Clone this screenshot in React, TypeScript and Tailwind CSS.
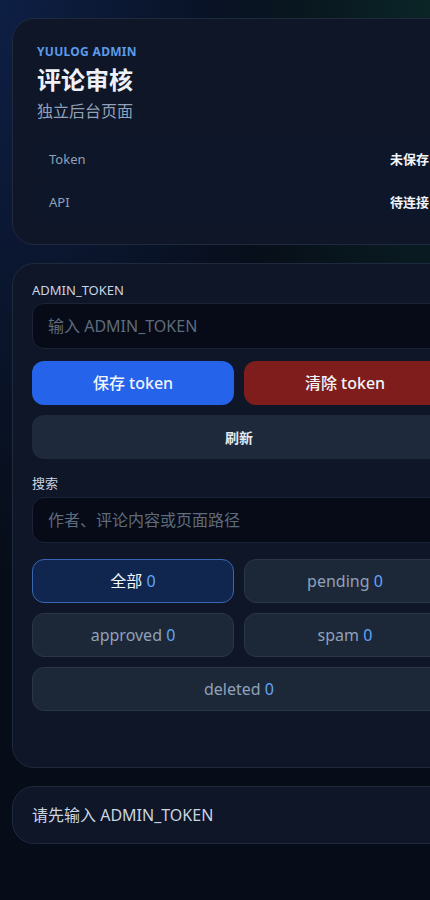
import React from "react";

const font = { fontFamily: '"Noto Sans", "Noto Sans CJK SC", sans-serif' };

const filters = [
  { label: "全部", count: 0, active: true },
  { label: "pending", count: 0 },
  { label: "approved", count: 0 },
  { label: "spam", count: 0 },
];

export default function App() {
  return (
    <div
      className="min-h-[900px] w-[478px] bg-[#070d18] bg-[radial-gradient(ellipse_at_top_left,#0e1f45_0%,transparent_45%),radial-gradient(ellipse_at_top_right,#0b2a2a_0%,transparent_40%)] px-3 pt-[18px] pb-10 text-slate-100"
      style={font}
    >
      <div className="flex flex-col gap-[18px]">
        {/* header */}
        <section className="rounded-[22px] border border-[#1f2a3d] bg-[#0e1628] px-[24px] pt-[24px] pb-[21px]">
          <p className="text-[12px] font-bold tracking-wide text-[#5b9bea]">YUULOG ADMIN</p>
          <h1 className="mt-[3px] text-[24px] leading-8 font-bold text-[#eef2f8]">评论审核</h1>
          <p className="mt-[3px] text-[16px] leading-6 text-slate-400">独立后台页面</p>
          <div className="mt-[17px] flex flex-col gap-[3px]">
            <div className="flex h-[40px] items-center justify-between rounded-lg bg-[#0e172a] px-3 text-[13px]">
              <span className="text-slate-400">Token</span>
              <span className="font-bold text-slate-100">未保存</span>
            </div>
            <div className="flex h-[40px] items-center justify-between rounded-lg bg-[#0e172a] px-3 text-[13px]">
              <span className="text-slate-400">API</span>
              <span className="font-bold text-slate-100">待连接</span>
            </div>
          </div>
        </section>

        {/* controls */}
        <section className="rounded-[22px] border border-[#1f2a3d] bg-[#0e1628] px-[19px] pt-[16px] pb-[56px]">
          <label className="block text-[13px] leading-5 text-slate-300">ADMIN_TOKEN</label>
          <input
            className="mt-[3px] h-[46px] w-full rounded-xl border border-[#1a2436] bg-[#060b17] px-[15px] text-[16px] text-slate-200 placeholder:text-[#5f6b7d] outline-none"
            placeholder="输入 ADMIN_TOKEN"
          />
          <div className="mt-[12px] grid grid-cols-2 gap-[10px]">
            <button className="h-[44px] rounded-xl bg-[#2563eb] text-[16px] font-medium text-slate-100">保存 token</button>
            <button className="h-[44px] rounded-xl bg-[#7f1d1d] text-[16px] font-medium text-slate-100">清除 token</button>
          </div>
          <button className="mt-[10px] h-[44px] w-full rounded-xl bg-[#1e293b] text-[14px] font-bold text-slate-200">刷新</button>

          <label className="mt-[14px] block text-[13px] leading-5 text-slate-300">搜索</label>
          <input
            className="mt-[4px] h-[46px] w-full rounded-xl border border-[#1a2436] bg-[#060b17] px-[15px] text-[16px] text-slate-200 placeholder:text-[#5f6b7d] outline-none"
            placeholder="作者、评论内容或页面路径"
          />
          <div className="mt-4 grid grid-cols-2 gap-[10px]">
            {filters.map((f) => (
              <button
                key={f.label}
                className={
                  f.active
                    ? "h-[44px] rounded-xl border border-[#3866b3] bg-[#10264f] text-[16px] text-slate-100"
                    : "h-[44px] rounded-xl border border-[#2a3649] bg-[#1c2738] text-[16px] text-slate-400"
                }
              >
                {f.label} <span className="text-[#60a5fa]">{f.count}</span>
              </button>
            ))}
            <button className="col-span-2 h-[44px] rounded-xl border border-[#2a3649] bg-[#1c2738] text-[16px] text-slate-400">
              deleted <span className="text-[#60a5fa]">0</span>
            </button>
          </div>
        </section>

        {/* status */}
        <section className="rounded-[22px] border border-[#1f2a3d] bg-[#0e1628] px-[19px] py-[16px]">
          <p className="text-[16px] leading-6 text-slate-300">请先输入 ADMIN_TOKEN</p>
        </section>
      </div>
    </div>
  );
}
